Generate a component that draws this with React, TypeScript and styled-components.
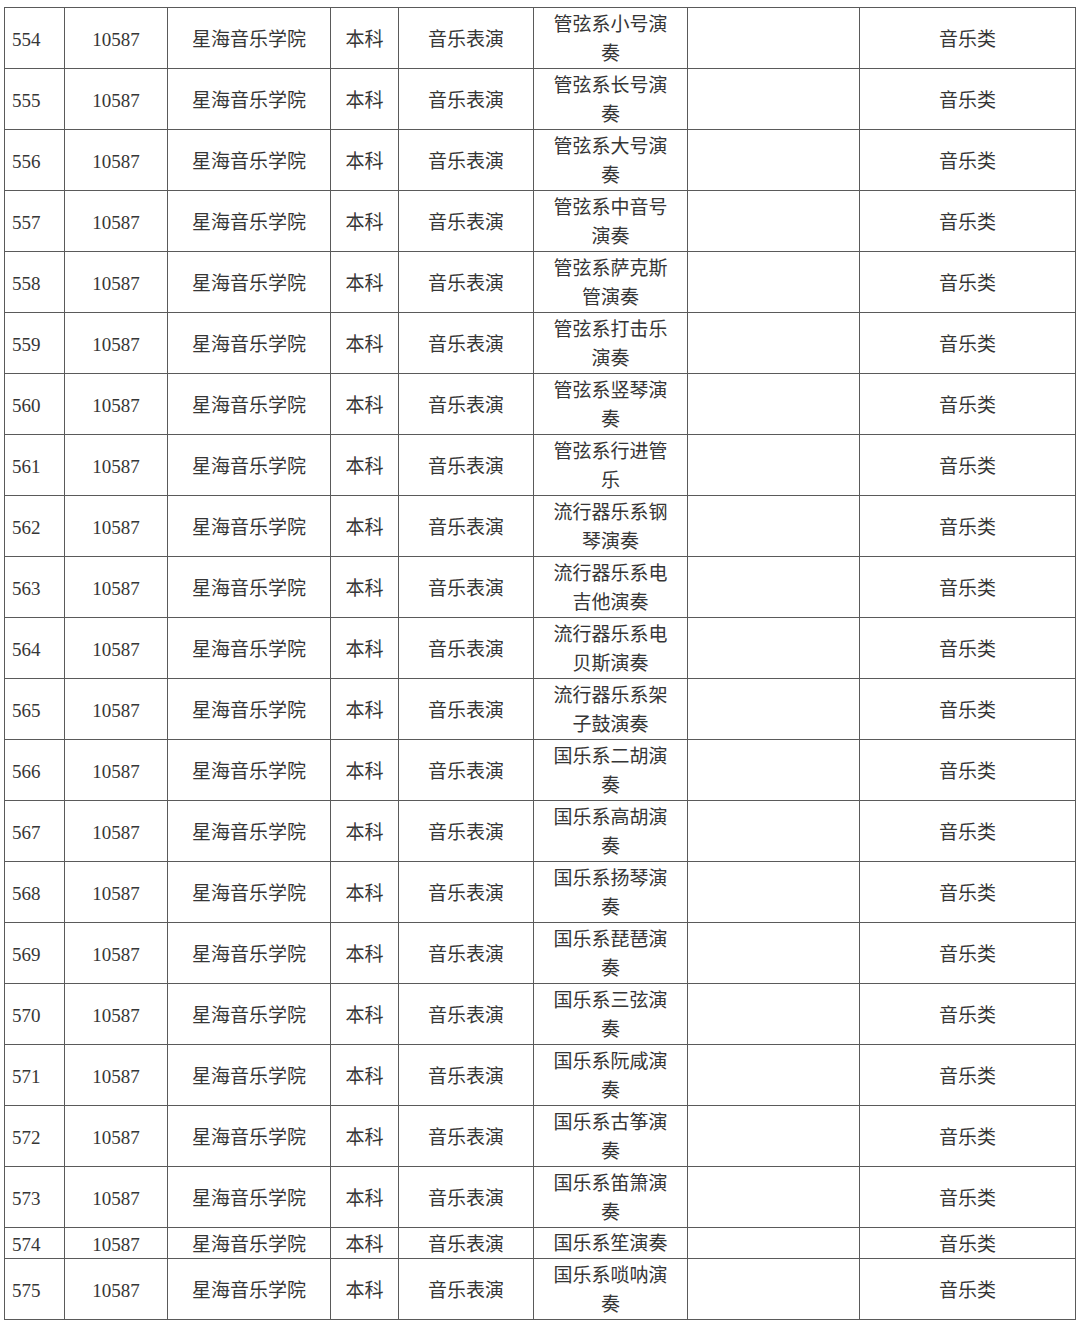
import { createGlobalStyle, styled } from 'styled-components'

const GlobalStyle = createGlobalStyle`
  html, body {
    margin: 0;
    background: #ffffff;
  }
`

const SPage = styled.div`
  padding: 7px 0 0 4px;
  font-family: 'Liberation Serif', 'Noto Sans CJK SC', serif;
  color: #363636;
`

const STable = styled.table`
  border-collapse: collapse;
  table-layout: fixed;
  width: 1071px;
  font-size: 19px;
`

const SRow = styled.tr<{ $short?: boolean }>`
  height: ${p => (p.$short ? 31 : 61)}px;
`

const SCell = styled.td<{ $left?: boolean }>`
  border: 1px solid #5a5a5a;
  padding: 3px 0 0 ${p => (p.$left ? 7 : 0)}px;
  text-align: ${p => (p.$left ? 'left' : 'center')};
  vertical-align: middle;
  line-height: 24px;
`

const SMajorCell = styled(SCell)`
  padding: 1px 14px 0;
  line-height: 29px;
`

const widths = [60, 103, 163, 68, 135, 154, 172, 216]

const majors = [
  '管弦系小号演奏',
  '管弦系长号演奏',
  '管弦系大号演奏',
  '管弦系中音号演奏',
  '管弦系萨克斯管演奏',
  '管弦系打击乐演奏',
  '管弦系竖琴演奏',
  '管弦系行进管乐',
  '流行器乐系钢琴演奏',
  '流行器乐系电吉他演奏',
  '流行器乐系电贝斯演奏',
  '流行器乐系架子鼓演奏',
  '国乐系二胡演奏',
  '国乐系高胡演奏',
  '国乐系扬琴演奏',
  '国乐系琵琶演奏',
  '国乐系三弦演奏',
  '国乐系阮咸演奏',
  '国乐系古筝演奏',
  '国乐系笛箫演奏',
  '国乐系笙演奏',
  '国乐系唢呐演奏',
]

export default function App() {
  return (
    <SPage>
      <GlobalStyle />
      <STable>
        <colgroup>
          {widths.map((w, i) => <col key={i} style={{ width: w }} />)}
        </colgroup>
        <tbody>
          {majors.map((m, i) => (
            <SRow key={i} $short={m.length <= 6}>
              <SCell $left>{554 + i}</SCell>
              <SCell>10587</SCell>
              <SCell>星海音乐学院</SCell>
              <SCell>本科</SCell>
              <SCell>音乐表演</SCell>
              <SMajorCell>{m}</SMajorCell>
              <SCell></SCell>
              <SCell>音乐类</SCell>
            </SRow>
          ))}
        </tbody>
      </STable>
    </SPage>
  )
}
